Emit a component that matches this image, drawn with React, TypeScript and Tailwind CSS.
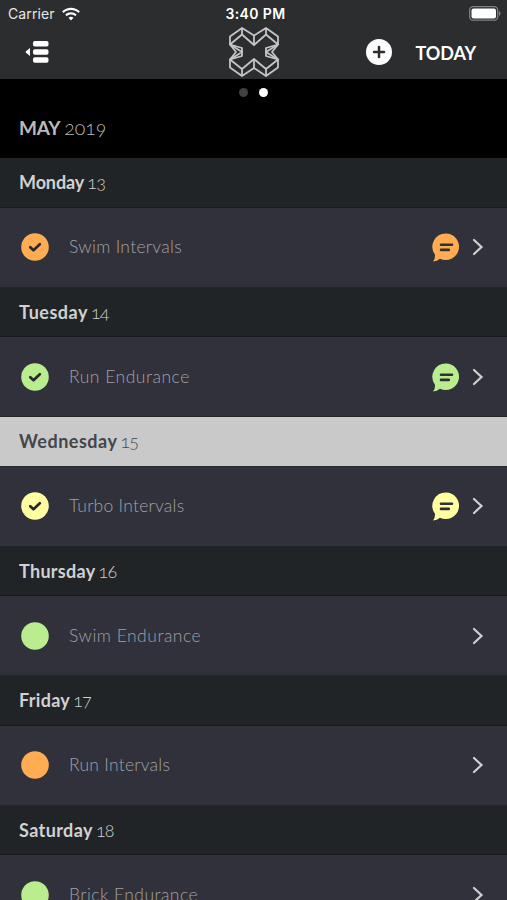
import { IoIosWifi } from 'react-icons/io';

interface Session {
  day: string;
  date: number;
  title: string;
  color: string;
  done?: boolean;
  titleSpacing: string;
  daySpacing: string;
}

const sessions: Session[] = [
  { day: 'Monday', date: 13, title: 'Swim Intervals', color: 'text-[#ffac52]', done: true, titleSpacing: 'tracking-[0.3px]', daySpacing: 'tracking-[-0.1px]' },
  { day: 'Tuesday', date: 14, title: 'Run Endurance', color: 'text-[#b9ed8d]', done: true, titleSpacing: 'tracking-[0.5px]', daySpacing: 'tracking-[0.5px]' },
  { day: 'Wednesday', date: 15, title: 'Turbo Intervals', color: 'text-[#ffffa2]', done: true, titleSpacing: 'tracking-[0.25px]', daySpacing: 'tracking-[0.5px]' },
  { day: 'Thursday', date: 16, title: 'Swim Endurance', color: 'text-[#b9ed8d]', titleSpacing: 'tracking-[0.5px]', daySpacing: 'tracking-[0.3px]' },
  { day: 'Friday', date: 17, title: 'Run Intervals', color: 'text-[#ffac52]', titleSpacing: 'tracking-[0.25px]', daySpacing: 'tracking-[0.3px]' },
  { day: 'Saturday', date: 18, title: 'Brick Endurance', color: 'text-[#b9ed8d]', titleSpacing: 'tracking-[0.45px]', daySpacing: 'tracking-[0.4px]' },
];

const TODAY = 15;

function Logo() {
  return (
    <svg width="50" height="50" viewBox="0 0 50 50" fill="none" stroke="#c4c5c6" strokeWidth="1.8" strokeLinejoin="round">
      <path d="M13 1 25 8.500 37 1 49 9.500V17.500L43 25 49 32.500V40.500L37 49 25 41 13 49 1 40.500V32.500L7 25 1 17.500V9.500Z" />
      <path d="M1 17.500 13 7.500 25 18 37 7.500 49 17.500 37 25 49 32.500 37 42 25 32 13 42 1 32.500 13 25Z" />
      <path d="M1 17.500 13 21V29L1 32.500M49 17.500 37 21V29L49 32.500" />
      <path d="M13 1V7.500M25 8.500V18M37 1V7.500M13 42V49M25 32V41M37 42V49" />
    </svg>
  );
}

function Status({ color, done }: { color: string; done?: boolean }) {
  return (
    <svg width="28" height="28" viewBox="0 0 28 28" fill="none" className={color}>
      <circle cx="14" cy="14" r="13.8" fill="currentColor" />
      {done && <path d="m9.300 14.200 3.200 3.100 6.300-6" stroke="#292a30" strokeWidth="2.700" strokeLinecap="round" strokeLinejoin="round" />}
    </svg>
  );
}

function Comment({ color }: { color: string }) {
  return (
    <svg width="28" height="30" viewBox="0 0 28 30" fill="none" className={color}>
      <path d="M13.800 1.500A13.300 13.300 0 1 1 8 26.800Q5 29.200 1 29.500 3.300 27 3 22.700A13.300 13.300 0 0 1 13.800 1.500Z" fill="currentColor" />
      <path d="M9 12.700H20M9 17.900H16.800" stroke="#2f3037" strokeWidth="2.600" strokeLinecap="round" />
    </svg>
  );
}

export default function App() {
  return (
    <div className="h-[900px] w-full overflow-hidden bg-[#30313a] font-['Lato',sans-serif] antialiased">
      <header className="h-[79px] bg-[#2b2d2e] text-white">
        {/* Status bar */}
        <div className="grid h-[27px] grid-cols-[1fr_auto_1fr] items-center pr-[6px] pl-2 font-['Inter',sans-serif]">
          <div className="flex items-center gap-1.5 text-[14px] tracking-[0.1px] text-[#e8e8e8]">
            Carrier
            <IoIosWifi className="h-5 w-5 text-white" />
          </div>
          <div className="pl-0.5 text-center text-[14px] font-semibold tracking-[0.4px]">3:40 PM</div>
          <svg className="justify-self-end" width="32" height="15" viewBox="0 0 32 15">
            <rect x="0.700" y="0.700" width="28" height="13.500" rx="3.500" fill="none" stroke="#808183" strokeWidth="1.300" />
            <rect x="2.500" y="2.500" width="24.500" height="10" rx="2" fill="white" />
            <path d="M30 5v5q1.500-.8 1.500-2.500T30 5Z" fill="#808183" />
          </svg>
        </div>

        <div className="grid h-[51px] grid-cols-3 items-center">
          <svg className="-mt-0.5 ml-[25px]" width="24" height="22" viewBox="0 0 24 22" fill="white">
            <path d="M5 7v8L1 11.700Q0 11 1 10.300Z" />
            <rect x="8" y="0" width="15.500" height="5.500" rx="1.800" />
            <rect x="8" y="8.200" width="15.500" height="5.500" rx="1.800" />
            <rect x="8" y="16.200" width="15.500" height="5.500" rx="1.800" />
          </svg>
          <div className="-mt-0.5 justify-self-center">
            <Logo />
          </div>
          <div className="-mt-px flex items-center justify-end gap-[23px] pr-[31px]">
            <svg width="26" height="26" viewBox="0 0 26 26">
              <circle cx="13" cy="13" r="13" fill="white" />
              <path d="M13 8v10M8 13h10" stroke="#2b2d2e" strokeWidth="2.500" strokeLinecap="round" />
            </svg>
            <span className="pt-0.5 text-[18px] font-bold tracking-[-0.1px]">TODAY</span>
          </div>
        </div>
      </header>

      <section className="h-[79px] bg-black">
        <div className="flex h-[26px] items-center justify-center gap-[11px]">
          <span className="h-[9px] w-[9px] rounded-full bg-[#414141]" />
          <span className="h-[9px] w-[9px] rounded-full bg-white" />
        </div>
        <h1 className="flex items-baseline gap-1 pl-[19px] text-[19px] leading-[46px] text-[#bababa]">
          <span className="font-bold tracking-[-0.3px]">MAY</span>
          <span className="text-[19.5px] font-light [font-feature-settings:'onum']">2019</span>
        </h1>
      </section>

      {sessions.map((s) => (
        <section key={s.date} className="h-[129.5px]">
          <h2
            className={`flex h-[49.5px] items-center border-b pl-[19px] text-[18px] ${
              s.date === TODAY ? 'border-[#292a31] bg-[#c9c9c9] text-[#45464a]' : 'border-[#191b1e] bg-[#202426] text-[#d0d1d2]'
            }`}
          >
            <div className="flex items-baseline gap-[3px] pt-px">
              <span className={`font-bold ${s.daySpacing}`}>{s.day}</span>
              <span className="text-[18px] font-light tracking-[-0.8px] [font-feature-settings:'onum']">{s.date}</span>
            </div>
          </h2>
          <div className="flex h-20 items-center border-b border-[#24252a] pr-[23px] pl-[21px]">
            <Status color={s.color} done={s.done} />
            <span className={`ml-5 flex-1 pt-px text-[17.5px] font-light text-[#a0a1a6] ${s.titleSpacing}`}>{s.title}</span>
            {s.done && <Comment color={s.color} />}
            <svg className="ml-[12px]" width="12" height="18" viewBox="0 0 12 18" fill="none">
              <path d="m2 2 7.500 7L2 16" stroke="#cfd0d2" strokeWidth="2.200" strokeLinecap="round" />
            </svg>
          </div>
        </section>
      ))}
    </div>
  );
}
